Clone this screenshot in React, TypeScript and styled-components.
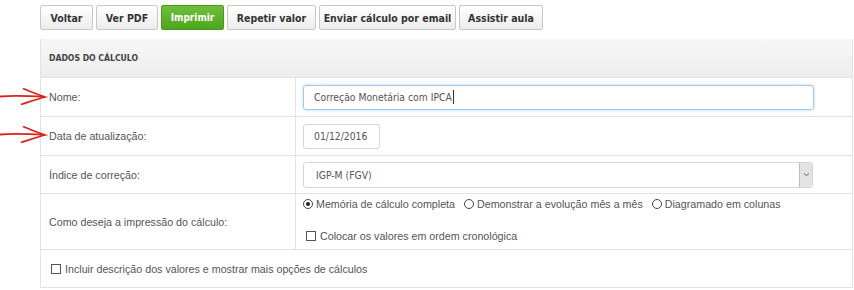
import React from 'react'
import styled, { createGlobalStyle } from 'styled-components'

const GlobalStyle = createGlobalStyle`
  body {
    margin: 0;
    background: #ffffff;
    font-family: 'Liberation Sans', Arial, sans-serif;
  }
`

const Page = styled.div`
  position: relative;
  width: 854px;
  height: 290px;
  padding: 5px 0 0 40px;
  box-sizing: border-box;
`

const Toolbar = styled.div`
  display: flex;
  gap: 3px;
  height: 25px;
`

const Button = styled.button<{ $primary?: boolean; $width: number }>`
  width: ${(p) => p.$width}px;
  height: 25px;
  padding: 0;
  border-radius: 2px;
  border: 1px solid ${(p) => (p.$primary ? '#4a9a1c' : '#c8c8c8')};
  background: ${(p) =>
    p.$primary
      ? 'linear-gradient(#6dc13a, #4ea51e)'
      : 'linear-gradient(#ffffff, #ececec)'};
  color: ${(p) => (p.$primary ? '#ffffff' : '#333333')};
  font-family: 'DejaVu Sans Condensed', 'DejaVu Sans', sans-serif;
  font-weight: bold;
  font-size: ${(p) => (p.$primary ? 10 : 10.5)}px;
  cursor: pointer;
`

const Panel = styled.div`
  margin-top: 11px;
  width: 811px;
  border: 1px solid #e3e3e3;
  border-top: none;
`

const PanelHeader = styled.div`
  height: 38px;
  display: flex;
  align-items: center;
  padding-left: 8px;
  background: linear-gradient(#f7f7f7, #ededed);
  border-bottom: 1px solid #e3e3e3;
  font-family: 'DejaVu Sans Condensed', 'DejaVu Sans', sans-serif;
  font-weight: bold;
  font-size: 8.6px;
  color: #444;
  margin-top: -2px;
`

const Row = styled.div<{ $height: number }>`
  display: grid;
  grid-template-columns: 255px 1fr;
  height: ${(p) => p.$height}px;
  border-bottom: 1px solid #e3e3e3;
`

const Label = styled.div`
  display: flex;
  align-items: center;
  padding-left: 8px;
  border-right: 1px solid #e3e3e3;
  font-size: 10.7px;
  color: #555;
`

const Field = styled.div`
  display: flex;
  flex-direction: column;
  justify-content: center;
  padding-left: 7px;
`

const inputFont = `
  font-family: 'DejaVu Sans Condensed', 'DejaVu Sans', sans-serif;
  font-size: 10.3px;
  color: #555;
`

const TextInput = styled.div<{ $focused?: boolean; $width: number }>`
  ${inputFont}
  box-sizing: border-box;
  width: ${(p) => p.$width}px;
  height: 25px;
  display: flex;
  align-items: center;
  padding-left: 10px;
  border-radius: 3px;
  border: 1px solid ${(p) => (p.$focused ? '#9fcbee' : '#d6d6d6')};
  box-shadow: ${(p) => (p.$focused ? '0 0 3px rgba(100,170,230,0.5)' : 'none')};
`

const Caret = styled.span`
  display: inline-block;
  width: 1px;
  height: 14px;
  background: #333;
  margin-left: 1px;
`

const Select = styled.div`
  ${inputFont}
  box-sizing: border-box;
  width: 510px;
  height: 26px;
  display: flex;
  align-items: center;
  justify-content: space-between;
  padding-left: 12px;
  border-radius: 3px;
  border: 1px solid #d6d6d6;
`

const SelectArrow = styled.div`
  width: 12px;
  height: 24px;
  display: flex;
  align-items: center;
  justify-content: center;
  background: #e3e3e3;
  border-left: 1px solid #bdbdbd;
  border-radius: 0 3px 3px 0;
`

const OptionLine = styled.div`
  display: flex;
  align-items: center;
  gap: 9px;
  font-size: 10.7px;
  color: #555;
`

const Choice = styled.label<{ $gap?: number }>`
  display: flex;
  align-items: center;
  gap: ${(p) => p.$gap ?? 3}px;
`

const Radio = styled.span<{ $checked?: boolean }>`
  box-sizing: border-box;
  width: 10px;
  height: 10px;
  border-radius: 50%;
  border: 1px solid #444;
  background: #fff;
  display: flex;
  align-items: center;
  justify-content: center;
  &::after {
    content: '';
    width: 4px;
    height: 4px;
    border-radius: 50%;
    background: ${(p) => (p.$checked ? '#222' : 'transparent')};
  }
`

const Check = styled.span`
  box-sizing: border-box;
  width: 10px;
  height: 10px;
  border: 1px solid #555;
  background: #fff;
`

const PrintField = styled(Field)`
  justify-content: flex-start;
  padding-top: 4px;
  gap: 20px;
`

const FullRow = styled.div`
  height: 37px;
  display: flex;
  align-items: center;
  gap: 4px;
  padding-left: 10px;
  font-size: 10.7px;
  color: #555;
`

const Arrow = styled.svg<{ $top: number }>`
  position: absolute;
  left: 0;
  top: ${(p) => p.$top}px;
`

const RedArrow = ({ top }: { top: number }) => (
  <Arrow $top={top} width="48" height="20" viewBox="0 0 48 20">
    <path d="M0 9.5 C12 8.5 30 9 45 10" stroke="#e0201a" strokeWidth="1.8" fill="none" />
    <path d="M23 1.5 C31 5 38 7.5 45 10 C37 12 29 15 21 17.5" stroke="#e0201a" strokeWidth="1.8" fill="none" />
  </Arrow>
)

export default function App() {
  return (
    <>
      <GlobalStyle />
      <Page>
        <RedArrow top={87} />
        <RedArrow top={125} />
        <Toolbar>
          <Button $width={53}>Voltar</Button>
          <Button $width={62}>Ver PDF</Button>
          <Button $primary $width={63}>Imprimir</Button>
          <Button $width={89}>Repetir valor</Button>
          <Button $width={137}>Enviar cálculo por email</Button>
          <Button $width={84}>Assistir aula</Button>
        </Toolbar>
        <Panel>
          <PanelHeader>DADOS DO CÁLCULO</PanelHeader>
          <Row $height={38}>
            <Label>Nome:</Label>
            <Field>
              <TextInput $focused $width={511}>
                Correção Monetária com IPCA<Caret />
              </TextInput>
            </Field>
          </Row>
          <Row $height={38}>
            <Label>Data de atualização:</Label>
            <Field>
              <TextInput $width={77}>01/12/2016</TextInput>
            </Field>
          </Row>
          <Row $height={37}>
            <Label>Índice de correção:</Label>
            <Field>
              <Select>
                IGP-M (FGV)
                <SelectArrow>
                  <svg width="7" height="5" viewBox="0 0 7 5">
                    <path d="M1 1.5 L3.5 3.5 L6 1.5" stroke="#666" strokeWidth="1" fill="none" />
                  </svg>
                </SelectArrow>
              </Select>
            </Field>
          </Row>
          <Row $height={55}>
            <Label>Como deseja a impressão do cálculo:</Label>
            <PrintField>
              <OptionLine>
                <Choice>
                  <Radio $checked />
                  Memória de cálculo completa
                </Choice>
                <Choice>
                  <Radio />
                  Demonstrar a evolução mês a mês
                </Choice>
                <Choice>
                  <Radio />
                  Diagramado em colunas
                </Choice>
              </OptionLine>
              <OptionLine>
                <Choice $gap={4} style={{ paddingLeft: 3 }}>
                  <Check />
                  Colocar os valores em ordem cronológica
                </Choice>
              </OptionLine>
            </PrintField>
          </Row>
          <FullRow>
            <Check />
            Incluir descrição dos valores e mostrar mais opções de cálculos
          </FullRow>
        </Panel>
      </Page>
    </>
  )
}
